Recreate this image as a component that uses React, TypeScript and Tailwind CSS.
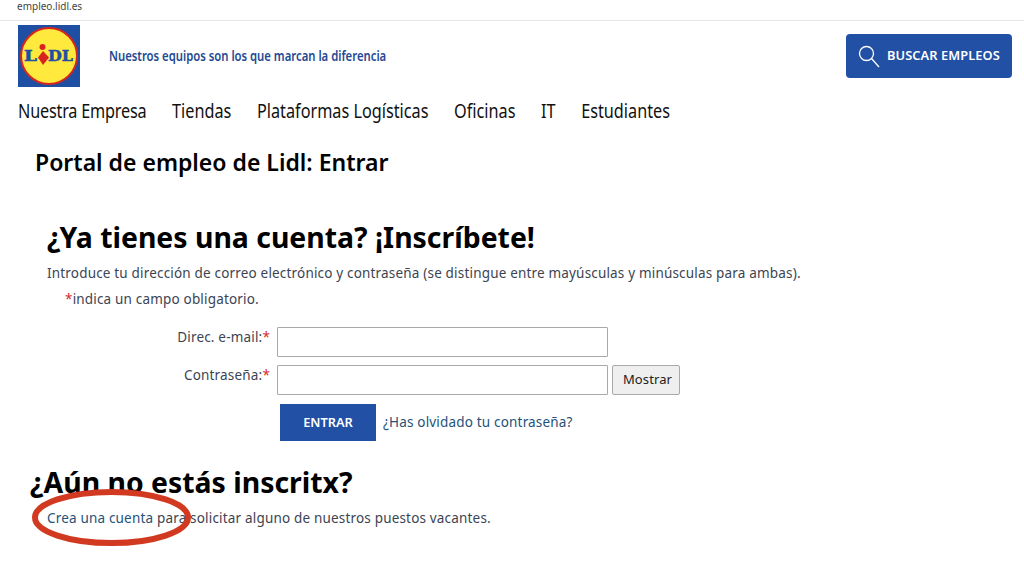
export default function App() {
  const sans = "font-['Noto_Sans','Liberation_Sans',sans-serif]";
  const body = "text-[13.5px] tracking-[0.18px] text-[#3c4452]";
  return (
    <div className={`relative w-[1024px] h-[567px] overflow-hidden bg-white ${sans}`}>
      <div className="h-[21px] border-b border-[#e6e6e6] pl-[17px] text-[10px] leading-[13px] text-[#444]">empleo.lidl.es</div>
      <header className="flex items-center h-[70px] pl-[18px] pr-[12px]">
        <svg width="62" height="62" viewBox="0 0 62 62" className="shrink-0">
          <rect width="62" height="62" fill="#1f4fa3" />
          <circle cx="31" cy="31" r="28" fill="#ffe93c" stroke="#d6251f" strokeWidth="2" />
          <text x="6" y="36" fontFamily="'DejaVu Serif',serif" fontWeight="900" fontSize="14" fill="#1f4fa3" stroke="#1f4fa3" strokeWidth="0.5" textLength="13" lengthAdjust="spacingAndGlyphs">L</text>
          <text x="30" y="36" fontFamily="'DejaVu Serif',serif" fontWeight="900" fontSize="14" fill="#1f4fa3" stroke="#1f4fa3" strokeWidth="0.5" textLength="25" lengthAdjust="spacingAndGlyphs">DL</text>
          <circle cx="24.5" cy="22" r="3" fill="#d6251f" />
          <path d="M25 26 L31 32.5 L25 40 L20 32.5 Z" fill="#d6251f" />
        </svg>
        <p className="ml-[29px] mb-[2px] text-[15px] font-semibold text-[#1f4a93] origin-left scale-x-[0.753] whitespace-nowrap">Nuestros equipos son los que marcan la diferencia</p>
        <button className="ml-auto flex items-center h-[44px] w-[166px] rounded-[4px] bg-[#2150a4] pl-[12px] text-white">
          <svg width="22" height="23" viewBox="0 0 22 23" fill="none" stroke="white" strokeWidth="1.3">
            <circle cx="8.5" cy="8.5" r="7" />
            <path d="M13.5 13.5 L21 22" />
          </svg>
          <span className="ml-[7px] text-[12.8px] font-semibold tracking-[0.1px]">BUSCAR EMPLEOS</span>
        </button>
      </header>
      <div className="pl-[18px] mt-[8px]">
        <nav className="flex gap-[31.5px] origin-left scale-x-[0.812] text-[20px] leading-[24px] text-[#111] whitespace-nowrap">
          <a className="tracking-[-0.25px]">Nuestra Empresa</a>
          <a>Tiendas</a>
          <a>Plataformas Logísticas</a>
          <a>Oficinas</a>
          <a>IT</a>
          <a>Estudiantes</a>
        </nav>
      </div>
      <h1 className="pl-[35px] mt-[24px] text-[23px] leading-[30px] font-semibold text-black">Portal de empleo de Lidl: Entrar</h1>
      <h2 className="pl-[47px] mt-[40px] text-[28.4px] leading-[40px] font-bold text-black">¿Ya tienes una cuenta? ¡Inscríbete!</h2>
      <p className={`pl-[47px] mt-[7px] leading-[18px] ${body}`}>Introduce tu dirección de correo electrónico y contraseña (se distingue entre mayúsculas y minúsculas para ambas).</p>
      <p className={`pl-[65px] mt-[8px] leading-[18px] ${body}`}><span className="text-[#d9262c]">*</span>indica un campo obligatorio.</p>
      <form className="mt-[19px] flex flex-col">
        <div className="flex items-start">
          <label className={`w-[270px] text-right leading-[20px] ${body}`}>Direc. e-mail:<span className="text-[#d9262c]">*</span></label>
          <input className="ml-[7px] w-[331px] h-[30px] bg-white border-[1.5px] border-[#a9a9a9] rounded-[1px] outline-none" />
        </div>
        <div className="flex items-start mt-[8px]">
          <label className={`w-[270px] text-right leading-[20px] ${body}`}>Contraseña:<span className="text-[#d9262c]">*</span></label>
          <input className="ml-[7px] w-[331px] h-[30px] bg-white border-[1.5px] border-[#a9a9a9] rounded-[1px] outline-none" />
          <button type="button" className="ml-[4px] w-[68px] h-[30px] pl-[3px] bg-[#efefef] border border-[#a9a9a9] rounded-[2px] text-[13px] tracking-[0.1px] text-[#222]">Mostrar</button>
        </div>
        <div className="flex items-center mt-[9px] pl-[280px]">
          <button type="button" className="w-[96px] h-[37px] bg-[#2150a4] text-white text-[12.8px] font-semibold">ENTRAR</button>
          <a className="ml-[7px] text-[13.5px] tracking-[0.18px] text-[#24527a]">¿Has olvidado tu contraseña?</a>
        </div>
      </form>
      <h2 className="pl-[30px] mt-[21px] text-[28.4px] leading-[40px] font-bold text-black">¿Aún no estás inscritx?</h2>
      <p className={`pl-[47px] mt-[7px] leading-[18px] ${body}`}><a className="text-[#24527a]">Crea una cuenta</a> para solicitar alguno de nuestros puestos vacantes.</p>
      <svg className="absolute left-[30px] top-[488px]" width="164" height="60" viewBox="0 0 164 60" fill="none">
        <ellipse cx="81.5" cy="29.5" rx="76.5" ry="25.5" stroke="#d13a20" strokeWidth="6" />
      </svg>
    </div>
  );
}
